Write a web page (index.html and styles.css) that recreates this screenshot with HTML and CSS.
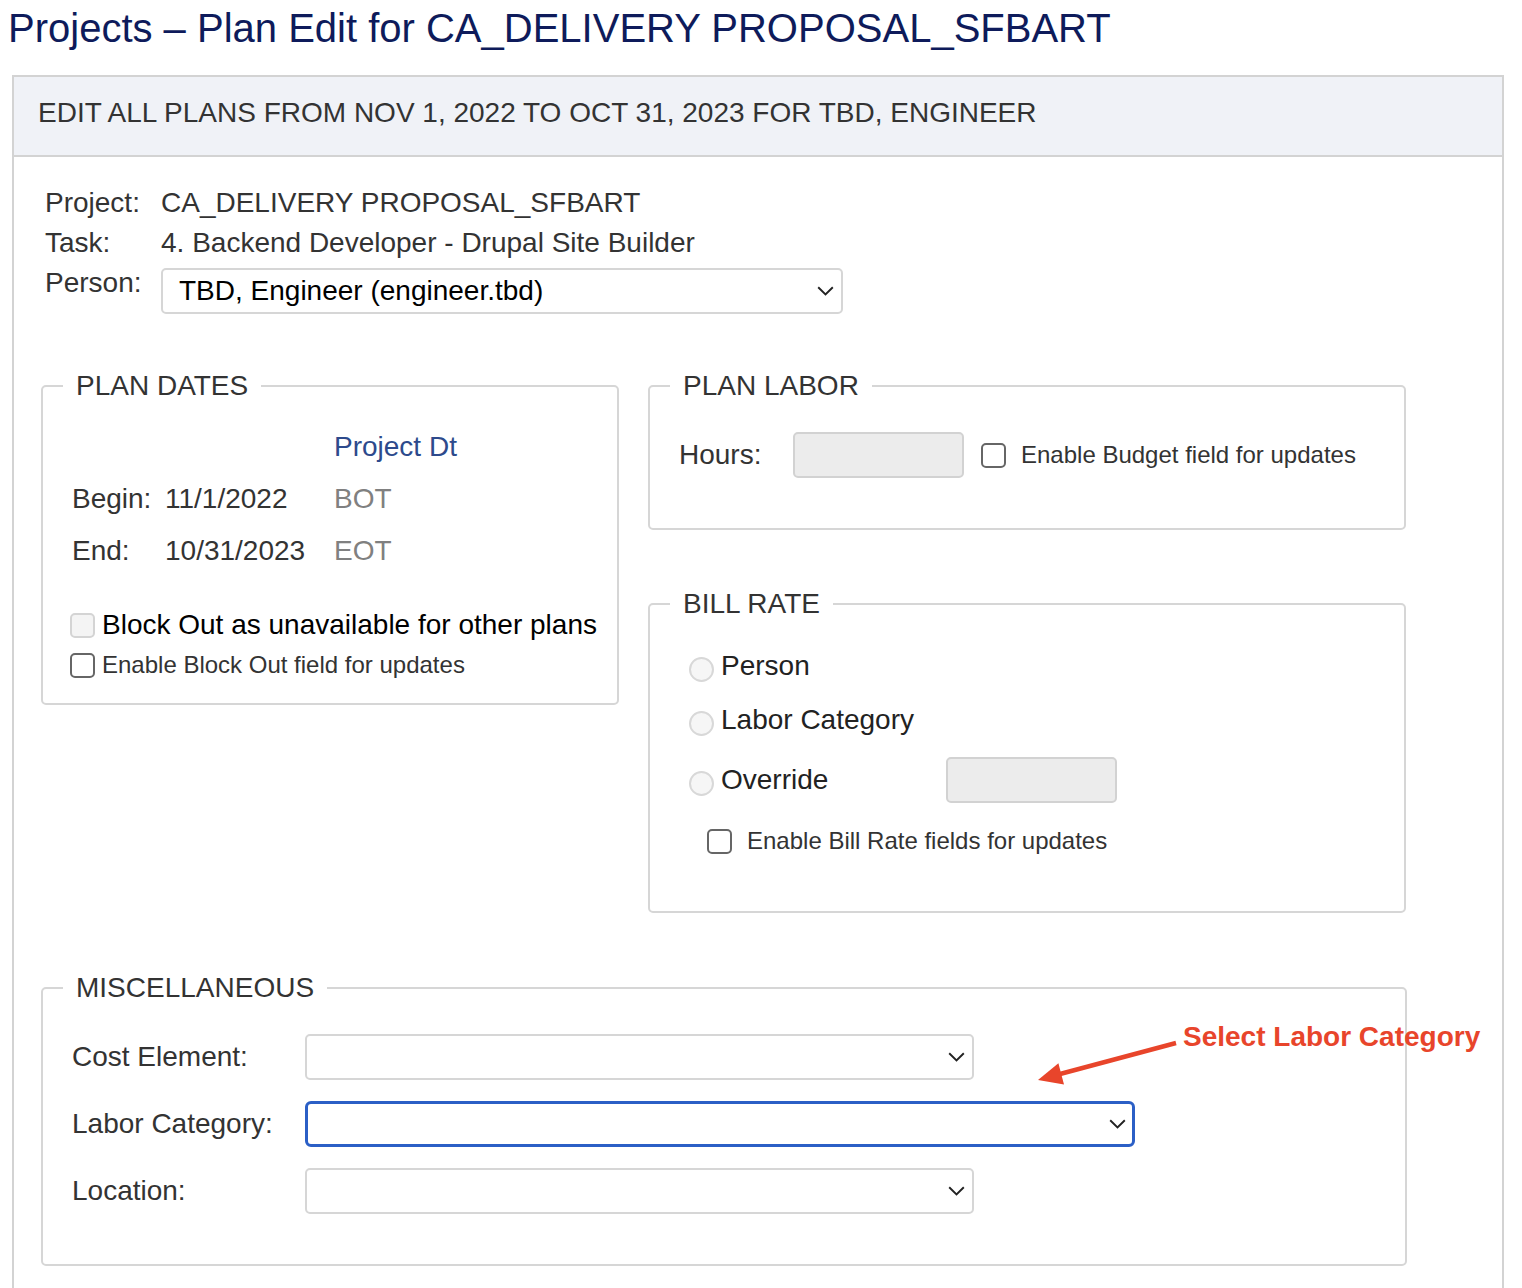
FILE: index.html
```html
<!DOCTYPE html>
<html>
<head>
<meta charset="utf-8">
<title>Plan Edit</title>
<link rel="stylesheet" href="styles.css">
</head>
<body>
<h1 class="page-title">Projects – Plan Edit for CA_DELIVERY PROPOSAL_SFBART</h1>
<div class="panel">
  <div class="panel-header">EDIT ALL PLANS FROM NOV 1, 2022 TO OCT 31, 2023 FOR TBD, ENGINEER</div>
  <div class="panel-body">
    <div class="info">
      <div class="info-row"><span class="info-label">Project:</span><span>CA_DELIVERY PROPOSAL_SFBART</span></div>
      <div class="info-row"><span class="info-label">Task:</span><span>4. Backend Developer - Drupal Site Builder</span></div>
      <div class="info-row person-row">
        <span class="info-label">Person:</span>
        <div class="select select-person">
          <span class="select-text">TBD, Engineer (engineer.tbd)</span>
          <svg class="chev" width="17" height="10" viewBox="0 0 17 10"><path d="M1.2 1.2 L8.5 8.4 L15.8 1.2" fill="none" stroke="#222" stroke-width="1.9"/></svg>
        </div>
      </div>
    </div>

    <div class="sections">
      <fieldset class="box box-dates">
        <legend>PLAN DATES</legend>
        <div class="dates-body">
          <div class="dates-grid">
            <span></span><span></span><span class="proj-dt">Project Dt</span>
            <span>Begin:</span><span>11/1/2022</span><span class="muted">BOT</span>
            <span>End:</span><span>10/31/2023</span><span class="muted">EOT</span>
          </div>
          <div class="check-row check-big"><span class="checkbox checkbox-disabled"></span><span>Block Out as unavailable for other plans</span></div>
          <div class="check-row check-small"><span class="checkbox"></span><span>Enable Block Out field for updates</span></div>
        </div>
      </fieldset>

      <div class="right-col">
        <fieldset class="box box-labor">
          <legend>PLAN LABOR</legend>
          <div class="labor-body">
            <span class="hours-label">Hours:</span>
            <span class="text-input"></span>
            <span class="checkbox labor-check"></span>
            <span class="small-text">Enable Budget field for updates</span>
          </div>
        </fieldset>

        <fieldset class="box box-rate">
          <legend>BILL RATE</legend>
          <div class="rate-body">
            <div class="radio-row row-person"><span class="radio"></span><span class="radio-text">Person</span></div>
            <div class="radio-row row-labor"><span class="radio"></span><span class="radio-text">Labor Category</span></div>
            <div class="radio-row row-override"><span class="radio"></span><span class="radio-text override-text">Override</span><span class="text-input"></span></div>
            <div class="rate-check"><span class="checkbox"></span><span class="small-text">Enable Bill Rate fields for updates</span></div>
          </div>
        </fieldset>
      </div>
    </div>

    <fieldset class="box box-misc">
      <legend>MISCELLANEOUS</legend>
      <div class="misc-body">
        <div class="misc-row">
          <span class="misc-label">Cost Element:</span>
          <div class="select select-short"><span class="select-text"></span>
            <svg class="chev" width="17" height="10" viewBox="0 0 17 10"><path d="M1.2 1.2 L8.5 8.4 L15.8 1.2" fill="none" stroke="#222" stroke-width="1.9"/></svg></div>
        </div>
        <div class="misc-row">
          <span class="misc-label">Labor Category:</span>
          <div class="select select-long select-focus"><span class="select-text"></span>
            <svg class="chev" width="17" height="10" viewBox="0 0 17 10"><path d="M1.2 1.2 L8.5 8.4 L15.8 1.2" fill="none" stroke="#222" stroke-width="1.9"/></svg></div>
        </div>
        <div class="misc-row">
          <span class="misc-label">Location:</span>
          <div class="select select-short"><span class="select-text"></span>
            <svg class="chev" width="17" height="10" viewBox="0 0 17 10"><path d="M1.2 1.2 L8.5 8.4 L15.8 1.2" fill="none" stroke="#222" stroke-width="1.9"/></svg></div>
        </div>
      </div>
    </fieldset>
  </div>
</div>

<svg class="callout-arrow" width="150" height="60" viewBox="0 0 150 60">
  <line x1="146" y1="8" x2="30" y2="39" stroke="#e8452b" stroke-width="4.5"/>
  <polygon points="8,45 28.4,28.2 34,49.4" fill="#e8452b"/>
</svg>
<div class="callout-text">Select Labor Category</div>
</body>
</html>
```

FILE: styles.css
```css
* { box-sizing: border-box; }

body {
  margin: 0;
  position: relative;
  font-family: "Liberation Sans", Arial, Helvetica, sans-serif;
  color: #333;
  background: #fff;
  overflow: hidden;
}

.page-title {
  margin: 5px 0 24px 8px;
  font-size: 40px;
  line-height: 46px;
  font-weight: normal;
  color: #0e1b5b;
}

.panel {
  margin-left: 12px;
  width: 1492px;
  border: 2px solid #d3d3d3;
  border-bottom: none;
}

.panel-header {
  background: #f0f2f7;
  border-bottom: 2px solid #d3d3d3;
  padding: 20px 0 26px 24px;
  font-size: 28px;
  line-height: 32px;
  color: #333;
}

.panel-body {
  padding: 26px 0 60px 27px;
}

.info {
  padding-left: 4px;
  font-size: 28px;
  color: #333;
}

.info-row {
  display: flex;
  line-height: 40px;
}

.info-label {
  width: 116px;
  flex: none;
}

.person-row {
  align-items: flex-start;
}

.select {
  display: flex;
  align-items: center;
  justify-content: space-between;
  height: 46px;
  border: 2px solid #d6d6d6;
  border-radius: 5px;
  background: #fff;
  padding: 0 7px 0 16px;
  font-size: 28px;
  color: #000;
}

.select-person {
  width: 682px;
  margin-top: 5px;
}

.chev { flex: none; }

.sections {
  margin-top: 57px;
  display: grid;
  grid-template-columns: 578px 758px;
  column-gap: 29px;
  align-items: start;
}

.box {
  margin: 0;
  padding: 0;
  min-width: 0;
  border: 2px solid #d6d6d6;
  border-radius: 5px;
}

.box legend {
  margin-left: 20px;
  padding: 0 13px;
  font-size: 28px;
  line-height: 30px;
  color: #333;
}

.dates-body {
  padding: 20px 0 20px 29px;
  font-size: 28px;
}

.dates-grid {
  display: grid;
  grid-template-columns: 93px 169px auto;
  grid-auto-rows: 52px;
  align-items: center;
  color: #333;
}

.proj-dt { color: #2d4a8c; }
.muted { color: #808080; }

.check-row {
  display: flex;
  align-items: center;
  height: 36px;
}

.check-big {
  margin-top: 30px;
  font-size: 28px;
  color: #000;
}

.check-small {
  margin-top: 4px;
  font-size: 24px;
  color: #333;
}

.checkbox {
  flex: none;
  width: 25px;
  height: 25px;
  border: 2px solid #666;
  border-radius: 5px;
  background: #fff;
}

.check-row .checkbox {
  margin-left: -2px;
  margin-right: 7px;
}

.checkbox-disabled {
  border-color: #d4d4d4;
  background: #f4f4f4;
}

.right-col {
  display: flex;
  flex-direction: column;
  gap: 59px;
}

.labor-body {
  display: flex;
  align-items: center;
  padding: 31px 0 50px 29px;
}

.hours-label {
  width: 114px;
  font-size: 28px;
  color: #333;
}

.text-input {
  flex: none;
  width: 171px;
  height: 46px;
  background: #ececec;
  border: 2px solid #d2d2d2;
  border-radius: 5px;
}

.labor-check {
  margin: 0 15px 0 17px;
}

.small-text {
  font-size: 24px;
  color: #333;
}

.rate-body {
  padding: 27px 0 52px 39px;
}

.radio-row {
  display: flex;
  align-items: center;
  font-size: 28px;
  color: #222;
}

.row-person { height: 40px; }
.row-labor { height: 40px; margin-top: 14px; }
.row-override { height: 46px; margin-top: 17px; }

.radio {
  flex: none;
  width: 25px;
  height: 25px;
  border-radius: 50%;
  border: 2px solid #d8d8d8;
  background: #f6f6f6;
  margin-top: 6px;
}

.radio-text {
  margin-left: 7px;
}

.override-text {
  width: 225px;
}

.rate-check {
  display: flex;
  align-items: center;
  height: 36px;
  margin-top: 20px;
  padding-left: 18px;
}

.rate-check .checkbox {
  margin-right: 15px;
}

.box-misc {
  margin-top: 60px;
  width: 1366px;
}

.misc-body {
  padding: 31px 0 50px 29px;
}

.misc-row {
  display: flex;
  align-items: center;
  height: 46px;
  margin-bottom: 21px;
}

.misc-row:last-child { margin-bottom: 0; }

.misc-label {
  width: 233px;
  flex: none;
  font-size: 28px;
  color: #333;
}

.select-short { width: 669px; }
.select-long { width: 830px; }

.select-focus {
  border: 3px solid #2b5fc6;
  border-radius: 6px;
  padding-right: 6px;
}

.callout-arrow {
  position: absolute;
  left: 1030px;
  top: 1035px;
}

.callout-text {
  position: absolute;
  left: 1183px;
  top: 1021px;
  font-size: 28px;
  line-height: 32px;
  font-weight: bold;
  color: #e8452b;
  white-space: nowrap;
}
```
